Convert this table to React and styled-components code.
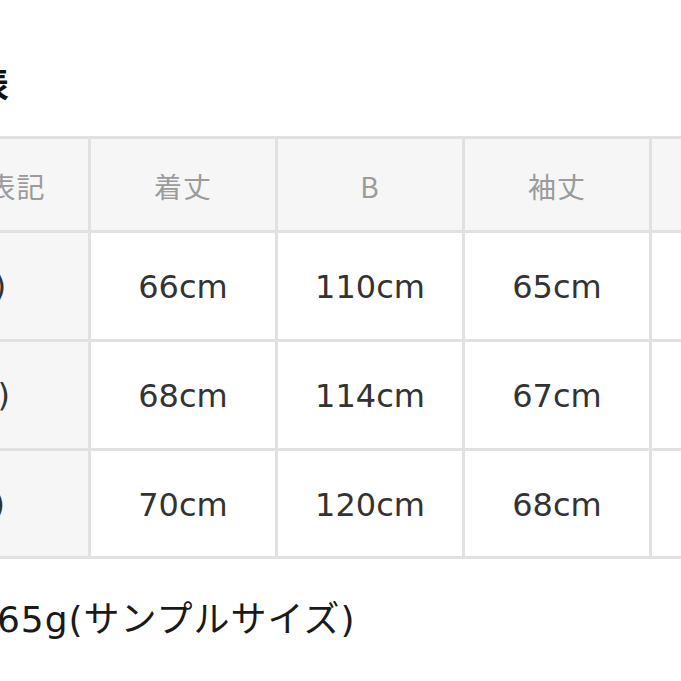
import React from 'react';
import styled, { createGlobalStyle } from 'styled-components';

// ----- global -----

const Global = createGlobalStyle`
    html, body {
        margin: 0;
        padding: 0;
        background: #ffffff;
        overflow: hidden;
    }
    body {
        font-family: "DejaVu Sans", "Noto Sans CJK JP", sans-serif;
    }
`

// ----- style -----

const Page = styled.div`
    width: 1200px;
    margin-left: -144px;
`

const Heading = styled.h2`
    margin: 62px 0 33px 18px;
    font-family: "Noto Sans CJK JP", sans-serif;
    font-size: 34px;
    line-height: 41px;
    font-weight: 700;
    color: #111;
    white-space: nowrap;
`

const Table = styled.div`
    display: grid;
    grid-template-columns: 232px 187px 187px 187px 187px;
    grid-template-rows: 94px 109px 109px 108px;
    border-top: 3px solid #e1e1e1;
    border-left: 3px solid #e1e1e1;
    width: max-content;
`

const Cell = styled.div`
    box-sizing: border-box;
    display: flex;
    align-items: center;
    justify-content: center;
    padding-top: ${p => (p.label ? '0' : '2px')};
    border-right: 3px solid #e1e1e1;
    border-bottom: 3px solid #e1e1e1;
    background: ${p => (p.head || p.label ? '#f6f6f6' : '#ffffff')};
    color: ${p => (p.head ? '#9b9b9b' : '#333333')};
    font-family: ${p => (p.head ? '"Noto Sans CJK JP", sans-serif' : '"DejaVu Sans", "Noto Sans CJK JP", sans-serif')};
    font-size: ${p => (p.head ? '28px' : '32px')};
    letter-spacing: ${p => (p.head ? '1px' : '0')};
    white-space: nowrap;
`

const Note = styled.p`
    margin: 38px 0 0 -31px;
    font-size: 36px;
    line-height: 46px;
    letter-spacing: 1px;
    color: #1a1a1a;
    white-space: nowrap;
`

// ----- dane -----

const header = ['サイズ表記', '着丈', 'B', '袖丈', '肩幅']

const rows = [
    ['1(S)', '66cm', '110cm', '65cm', '52cm'],
    ['2(M)', '68cm', '114cm', '67cm', '54cm'],
    ['3(L)', '70cm', '120cm', '68cm', '56cm'],
]

// ----- komponent -----

export default function App() {
    return (
        <Page>
            <Global />
            <Heading>サイズ表</Heading>
            <Table>
                {header.map((h) => (
                    <Cell head key={h}>{h}</Cell>
                ))}
                {rows.map((r) =>
                    r.map((v, i) => (
                        <Cell label={i === 0} key={r[0] + i}>
                            {v}
                        </Cell>
                    ))
                )}
            </Table>
            <Note>重さ：約365g(サンプルサイズ)</Note>
        </Page>
    );
}
